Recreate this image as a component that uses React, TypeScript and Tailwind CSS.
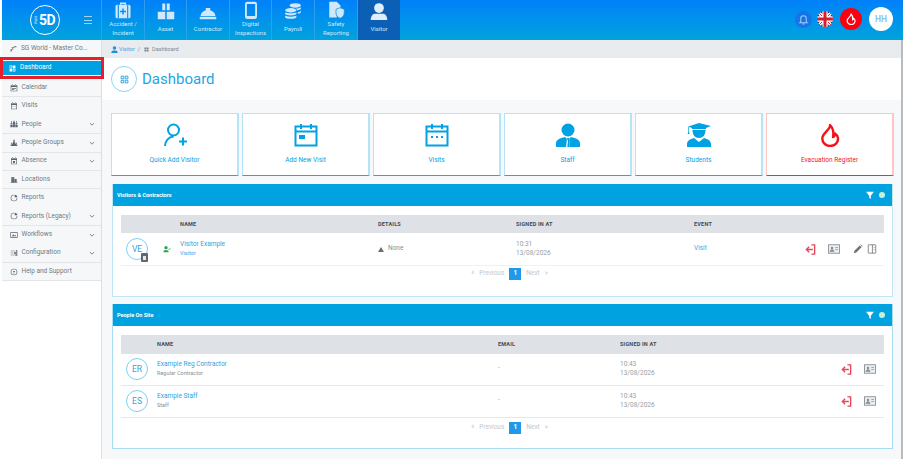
import React from "react";

type P = { className?: string };

const Ico = ({ className, children, vb = "0 0 24 24" }: P & { children: React.ReactNode; vb?: string }) => (
  <svg viewBox={vb} className={className} fill="currentColor" aria-hidden="true">
    {children}
  </svg>
);

const Logo = () => (
  <div className="w-[30px] h-[30px] rounded-full border-[1.5px] border-white flex items-center justify-center text-white font-bold text-[14px] leading-none tracking-[-0.5px]">
    <span className="text-[3px] [writing-mode:vertical-rl] rotate-180 mr-[1px] font-normal tracking-normal">World</span>5D
  </div>
);

const navIcons: Record<string, React.ReactNode> = {
  case: (
    <>
      <rect x="2" y="5" width="20" height="18" rx="2" />
      <path d="M8 5V2h8v3h-2V4h-4v1z" />
      <path fill="#0a8fea" d="M5 5h1.500v18H5zM17.500 5H19v18h-1.500zM11 10h2v3h3v2h-3v3h-2v-3H8v-2h3z" />
    </>
  ),
  asset: <path d="M7 2h4v9H7zM13 2h4v9h-4zM1 13h10v10H1zM13 13h10v10H13zM5 13h2v3H5zM17 13h2v3h-2z" />,
  hat: <path d="M2 19a10 9 0 0 1 7-8V8h6v3a10 9 0 0 1 7 8zM1 20h22v3H1z" />,
  phone: <path fillRule="evenodd" d="M7 1h10a3 3 0 0 1 3 3v17a3 3 0 0 1-3 3H7a3 3 0 0 1-3-3V4a3 3 0 0 1 3-3zm-.500 3v16h11V4z" />,
  coins: (
    <>
      <ellipse cx="9" cy="11" rx="7.500" ry="3" />
      <path d="M1.500 13.500c1 2 14 2 15 0V16c-1 2.500-14 2.500-15 0zM1.500 18c1 2 14 2 15 0v2.500c-1 2.500-14 2.500-15 0z" />
      <ellipse cx="15" cy="4.500" rx="7.500" ry="3" />
      <path d="M22.500 7v2c-.5 1-3 2-5 2-.5-1-1-2-2-2 3 0 6-1 7-2zM22.500 11.500v2c-.5 1-2 1.500-4 2v-2c2-.3 3-1 4-2z" />
    </>
  ),
  safety: (
    <>
      <path d="M3 1h10l5 5v5l-5 3v8H3z" />
      <path d="M17.500 9l5.500 2v5c0 4-3 6-5.500 7-2.500-1-5.500-3-5.500-7v-5z" stroke="#0a90e8" strokeWidth="1" />
    </>
  ),
  visitor: (
    <>
      <circle cx="12" cy="8" r="6.500" />
      <path d="M1 24c0-6 3-8.500 6-8.500h10c3 0 6 2.500 6 8.500z" />
    </>
  ),
};

const navs = [
  { icon: "case", l: ["Accident /", "Incident"], w: "w-[43px]" },
  { icon: "asset", l: ["Asset"], w: "w-[42px]" },
  { icon: "hat", l: ["Contractor"], w: "w-[43px]" },
  { icon: "phone", l: ["Digital", "Inspections"], w: "w-[42px]" },
  { icon: "coins", l: ["Payroll"], w: "w-[43px]" },
  { icon: "safety", l: ["Safety", "Reporting"], w: "w-[43px]" },
  { icon: "visitor", l: ["Visitor"], w: "w-[42px]", active: true },
];

const Flame = ({ className }: P) => (
  <svg viewBox="0 0 24 24" className={className} fill="none" stroke="currentColor" strokeWidth="2.400" strokeLinejoin="round" aria-hidden="true">
    <path d="M12 2c1 4-6 7-7.500 12C3.500 19 7.500 23 12 23s8.500-3 8-8c-.2-2-1.500-3.500-3-4.500 0 1.500-.5 3-2 3.500C16 9 15 5 12 2z" />
  </svg>
);

const Flag = () => (
  <svg viewBox="0 0 24 24" className="w-[16px] h-[16px] rounded-full" aria-hidden="true">
    <rect width="24" height="24" fill="#27346f" />
    <path d="M0 0l24 24M24 0L0 24" stroke="#fff" strokeWidth="5" />
    <path d="M0 0l24 24M24 0L0 24" stroke="#d2202f" strokeWidth="1.500" />
    <path d="M12 0v24M0 12h24" stroke="#fff" strokeWidth="8" />
    <path d="M12 0v24M0 12h24" stroke="#d2202f" strokeWidth="4.500" />
  </svg>
);

const Header = () => (
  <header className="h-[40px] shrink-0 flex bg-gradient-to-b from-[#0080fa] to-[#00a3dc] ml-[2px]">
    <div className="w-[100px] shrink-0 flex items-center border-r border-[#2aa0f0]">
      <div className="ml-[28px]">
        <Logo />
      </div>
      <div className="ml-[24px] flex flex-col gap-[2.500px]">
        <span className="block w-[8px] h-[1px] bg-[#9fd3f7]" />
        <span className="block w-[8px] h-[1px] bg-[#9fd3f7]" />
        <span className="block w-[8px] h-[1px] bg-[#9fd3f7]" />
      </div>
    </div>
    {navs.map((n) => (
      <div
        key={n.icon}
        className={`${n.w} shrink-0 flex flex-col items-center border-r border-[#2aa0f0] pt-[1px] ${n.active ? "bg-[#0b5fb5] border-r-0" : ""}`}
      >
        <div className={`h-[19px] flex items-center justify-center ${n.active ? "text-[#dfeefa]" : "text-[#cfe8fb]"}`}>
          <Ico className="w-[18px] h-[18px]">{navIcons[n.icon]}</Ico>
        </div>
        <div className="flex-1 flex flex-col justify-center pb-[4px] text-[6px] leading-[9px] text-center text-[#cfe9fb]">
          {n.l.map((t) => (
            <div key={t}>{t}</div>
          ))}
        </div>
      </div>
    ))}
    <div className="flex-1 flex items-center justify-end pr-[10px] pb-[2px]">
      <div className="w-[17px] h-[17px] rounded-full bg-[#1773e8] flex items-center justify-center text-[#9fd0fa] mr-[5px]">
        <svg viewBox="0 0 24 24" className="w-[11px] h-[11px]" fill="none" stroke="currentColor" strokeWidth="2.200" aria-hidden="true">
          <path d="M6 17V10a6 6 0 0 1 12 0v7l2 2H4zM10 22h4" />
        </svg>
      </div>
      <Flag />
      <div className="ml-[7px] w-[22px] h-[22px] rounded-full bg-[#fa0010] flex items-center justify-center text-white">
        <Flame className="w-[12px] h-[12px]" />
      </div>
      <div className="ml-[7px] w-[24px] h-[24px] rounded-full bg-white flex items-center justify-center text-[#8cc4ec] font-bold text-[8.500px]">
        HH
      </div>
    </div>
  </header>
);

const side: { t: string; chev?: boolean; b?: boolean; i: React.ReactNode }[] = [
  { t: "Calendar", b: true, i: <path d="M2 4h20v18H2zM4 9v11h16V9zM6 12h12v2H6zM6 16h7v2H6zM6 1h2v4H6zM16 1h2v4h-2z" fillRule="evenodd" /> },
  { t: "Visits", i: <path fillRule="evenodd" d="M3 4h18v18H3zM5 9v11h14V9zM7 1h2v4H7zM15 1h2v4h-2zM8 12h2v2H8zM14 12h2v2h-2z" /> },
  { t: "People", chev: true, b: true, i: <path d="M2 8h5v5H2zM9 6h6v6H9zM17 8h5v5h-5zM1 14h6v8H1zM8 13h8v9H8zM17 14h6v8h-6zM3 4h3v3H3zM10 2h4v3h-4zM18 4h3v3h-3z" /> },
  { t: "People Groups", chev: true, b: true, i: <path d="M10 7l4 0 3 8 5 2v4H2v-4l5-2zM10 2h4v4h-4zM3 11h3v3H3zM18 11h3v3h-3z" /> },
  { t: "Absence", chev: true, b: true, i: <path fillRule="evenodd" d="M3 4h18v18H3zM5 9v11h14V9zM7 1h2v4H7zM15 1h2v4h-2zM9 12h6v6H9z" /> },
  { t: "Locations", b: true, i: <path fillRule="evenodd" d="M4 3h9v15H4zM6 5v2h2V5zM10 5v2h2V5zM14 9h6v9h-6zM2 19h20v2H2z" /> },
  { t: "Reports", i: <path fillRule="evenodd" d="M12 2a10 10 0 1 0 10 10h-2a8 8 0 1 1-8-8zM14 2a8 8 0 0 1 8 8h-8z" /> },
  { t: "Reports (Legacy)", chev: true, b: true, i: <path fillRule="evenodd" d="M12 2a10 10 0 1 0 10 10h-2a8 8 0 1 1-8-8zM14 2a8 8 0 0 1 8 8h-8z" /> },
  { t: "Workflows", chev: true, b: false, i: <path fillRule="evenodd" d="M1 4h22v16H1zM3 6v12h18V6zM5 16l5-6 4 4 2-2 3 4z" /> },
  { t: "Configuration", chev: true, b: true, i: <path d="M2 5h14v2H2zM2 11h8v2H2zM2 17h12v2H2zM18 4h4v4h-4zM12 10h10v4H12zM16 16h6v4h-6z" /> },
  { t: "Help and Support", b: true, i: <path fillRule="evenodd" d="M12 2a10 10 0 1 0 0 20 10 10 0 0 0 0-20zm0 2a8 8 0 1 1 0 16 8 8 0 0 1 0-16zM9 9h6v2h-2v3h-2v-3H9zM11 15h2v2h-2z" /> },
];

const Chevron = () => (
  <svg viewBox="0 0 10 10" className="w-[6px] h-[6px] text-[#777]" fill="none" stroke="currentColor" strokeWidth="1.500" aria-hidden="true">
    <path d="M1.500 3.500L5 7l3.500-3.500" />
  </svg>
);

const Sidebar = () => (
  <aside className="relative z-10 w-[102px] shrink-0 border-r border-[#dcdfe3] bg-white text-[6.500px] text-[#6f7a84]">
    <div className="ml-[2px] bg-[#f6f7f8]">
      <div className="h-[17px] flex items-center pl-[8px]">
        <svg viewBox="0 0 24 24" className="w-[7px] h-[7px] mr-[4px] text-[#666]" fill="currentColor" aria-hidden="true">
          <path d="M2 14h4v8H2zM8 10h3v6H8zM14 4h8v4h-8zM6 8h8v2H6z" />
        </svg>
        <span>SG World - Master Co...</span>
      </div>
      <div className="-ml-[2px] -mr-[3px] h-[22px] border-[3px] border-[#e5202c] bg-white flex">
        <div className="flex-1 bg-[#00a1e2] text-white flex items-center pl-[6px] border-y-[1px] border-white">
          <svg viewBox="0 0 24 24" className="w-[7px] h-[7px] mr-[4px]" fill="currentColor" aria-hidden="true">
            <path fillRule="evenodd" d="M2 2h9v9H2zM13 2h9v9h-9zM2 13h9v9H2zM13 13h9v9h-9zM4 4v5h5V4zM15 15v5h5v-5z" />
          </svg>
          Dashboard
        </div>
      </div>
      {side.map((s) => (
        <div
          key={s.t}
          className={`h-[18.400px] flex items-center pl-[8px] pr-[6px] border-b ${s.b ? "border-[#e3e5e8]" : "border-transparent"}`}
        >
          <svg viewBox="0 0 24 24" className="w-[8px] h-[8px] mr-[3.500px] shrink-0 text-[#5c6670]" fill="currentColor" aria-hidden="true">
            {s.i}
          </svg>
          <span className="flex-1">{s.t}</span>
          {s.chev && <Chevron />}
        </div>
      ))}
    </div>
  </aside>
);

const cards: { t: string; red?: boolean; i: React.ReactNode }[] = [
  {
    t: "Quick Add Visitor",
    i: (
      <svg viewBox="0 0 24 24" className="w-[24px] h-[24px]" fill="none" stroke="currentColor" strokeWidth="2" aria-hidden="true">
        <circle cx="10.500" cy="7" r="5.500" />
        <path d="M2 23c0-5 3.500-9 8.500-9.500M16 18.500h8M20 14.500v8" />
      </svg>
    ),
  },
  {
    t: "Add New Visit",
    i: (
      <svg viewBox="0 0 24 24" className="w-[24px] h-[24px]" fill="none" stroke="currentColor" strokeWidth="2" aria-hidden="true">
        <rect x="1.500" y="3.500" width="21" height="19" />
        <path d="M1.500 8.500h21M7 1v5M17 1v5" />
        <rect x="5" y="12" width="6" height="4" fill="currentColor" stroke="none" />
      </svg>
    ),
  },
  {
    t: "Visits",
    i: (
      <svg viewBox="0 0 24 24" className="w-[24px] h-[24px]" fill="none" stroke="currentColor" strokeWidth="2" aria-hidden="true">
        <rect x="1.500" y="3.500" width="21" height="19" />
        <path d="M1.500 8.500h21M7 1v5M17 1v5" />
        <path d="M6 14h2M11 14h2M16 14h2" />
      </svg>
    ),
  },
  {
    t: "Staff",
    i: (
      <svg viewBox="0 0 24 24" className="w-[24px] h-[24px]" fill="currentColor" aria-hidden="true">
        <circle cx="12" cy="7" r="6.500" />
        <path d="M0 24v-4c0-3 4-5 9-6l2 2-1 8zM24 24v-4c0-3-4-5-9-6l-2 2 1 8zM11 15h2l.5 2-.5 1 .7 6h-2.400l.7-6-.5-1z" />
      </svg>
    ),
  },
  {
    t: "Students",
    i: (
      <svg viewBox="0 0 24 24" className="w-[24px] h-[24px]" fill="currentColor" aria-hidden="true">
        <path d="M12 0l12 3-5 2v1H5V5L2 4v5l.7 2H.6l.7-2V3.500z" />
        <path d="M5.500 7h13c0 5-2.500 8-6.500 8s-6.500-3-6.500-8zM0 24v-3c0-3 3-5 7-6l5 4 5-4c4 1 7 3 7 6v3z" />
      </svg>
    ),
  },
  { t: "Evacuation Register", red: true, i: <Flame className="w-[24px] h-[24px]" /> },
];

const Card = ({ t, red, i }: (typeof cards)[number]) => (
  <div
    className={`flex-1 h-[63px] bg-white border border-r-[2px] flex flex-col items-center pt-[9px] ${
      red ? "border-[#ffc4c4] border-b-[#fa2a30] text-[#f5111a]" : "border-[#b5e3f8] border-b-[#1fa8e6] text-[#00a2e3]"
    }`}
  >
    {i}
    <div className="mt-[9px] text-[6.500px] leading-[9px]">{t}</div>
  </div>
);

const SectionHead = ({ t }: { t: string }) => (
  <div className="h-[22px] bg-[#00a2e0] flex items-center px-[4px] text-white font-bold text-[5.500px]">
    <span className="flex-1">{t}</span>
    <svg viewBox="0 0 10 10" className="w-[8px] h-[8px]" fill="currentColor" aria-hidden="true">
      <path d="M0 1h10L6 6v4L4 8.500V6z" />
    </svg>
    <span className="ml-[5px] mr-[3px] w-[6px] h-[6px] rounded-full bg-[#c5f0d5]" />
  </div>
);

const Exit = () => (
  <svg viewBox="0 0 24 24" className="w-[11px] h-[11px] text-[#e8465a]" fill="none" stroke="currentColor" strokeWidth="3" aria-hidden="true">
    <path d="M14 2h7v20h-7M17 12H3M9 6l-6 6 6 6" />
  </svg>
);

const IdCard = () => (
  <svg viewBox="0 0 24 24" className="w-[12px] h-[12px] text-[#8a8f94]" fill="none" stroke="currentColor" strokeWidth="1.800" aria-hidden="true">
    <rect x="1" y="3.500" width="22" height="17" fill="#eceff1" />
    <circle cx="8" cy="10" r="2.500" fill="currentColor" stroke="none" />
    <path d="M4 17c0-5 8-5 8 0zM14.500 9H20M14.500 13H20" fill="currentColor" strokeWidth="1.500" />
  </svg>
);

const Pager = () => (
  <div className="flex items-center justify-center pl-[14px] text-[6.500px] text-[#c4c8cc]">
    <span className="mr-[5px]">«</span>
    <span>Previous</span>
    <span className="mx-[5px] w-[12px] h-[12px] bg-[#2099e8] text-white font-bold flex items-center justify-center">1</span>
    <span>Next</span>
    <span className="ml-[5px]">»</span>
  </div>
);

const Avatar = ({ t, badge }: { t: string; badge?: boolean }) => (
  <div className="relative w-[22px] h-[22px] rounded-full border border-[#80cdf2] flex items-center justify-center text-[#2da4de] text-[8.500px]">
    {t}
    {badge && (
      <span className="absolute -right-[1px] -bottom-[3px] w-[7px] h-[9px] bg-[#5f6770] rounded-[1px] flex items-center justify-center">
        <span className="block w-[3px] h-[4px] bg-[#e8e8e8]" />
      </span>
    )}
  </div>
);

const headCell = "text-[5.500px] font-bold text-[#444c55] tracking-[0.2px]";

const Visitors = () => (
  <section className="h-[113px] shrink-0 bg-white border border-[#bfe6f6] border-t-0 flex flex-col">
    <SectionHead t="Visitors & Contractors" />
    <div className="mx-[8px] mt-[9px]">
      <div className={`grid grid-cols-[59px_198px_138px_178px_1fr] h-[18px] items-center bg-[#dee1e5] ${headCell}`}>
        <span />
        <span>NAME</span>
        <span>DETAILS</span>
        <span>SIGNED IN AT</span>
        <span>EVENT</span>
      </div>
      <div className="grid grid-cols-[59px_198px_138px_178px_1fr] h-[33px] items-center border-b border-[#f0f1f3] text-[6.500px]">
        <div className="flex items-center pl-[5px]">
          <Avatar t="VE" badge />
          <svg viewBox="0 0 24 24" className="ml-[15px] w-[8px] h-[8px] text-[#2aa84f]" fill="currentColor" aria-hidden="true">
            <circle cx="9" cy="8" r="5" />
            <path d="M1 22c0-5 3-7 8-7s8 2 8 7zM16 11l2 2 5-5 1 1-6 6-3-3z" />
          </svg>
        </div>
        <div className="leading-[9.500px]">
          <div className="text-[#2da4de]">Visitor Example</div>
          <div className="text-[#3c9be6] text-[5.500px]">Visitor</div>
        </div>
        <div className="flex items-center text-[#888e94]">
          <span className="w-0 h-0 border-x-[3px] border-x-transparent border-b-[5px] border-b-[#667079] mr-[4px]" />
          None
        </div>
        <div className="leading-[9.500px] text-[#9a9ea3]">
          <div>10:31</div>
          <div>13/08/2026</div>
        </div>
        <div className="flex items-center">
          <span className="w-[111px] text-[#3aa8e6]">Visit</span>
          <Exit />
          <span className="ml-[12px]"><IdCard /></span>
          <svg viewBox="0 0 24 24" className="ml-[13px] w-[10px] h-[10px] text-[#6c7278]" fill="currentColor" aria-hidden="true">
            <path d="M2 22l1.500-6L16 3.500l4.500 4.500L8 20.500zM17.500 2l1.500-1 4 4-1 1.500z" />
          </svg>
          <svg viewBox="0 0 24 24" className="ml-[4px] w-[10px] h-[10px] text-[#777]" fill="none" stroke="currentColor" strokeWidth="2" aria-hidden="true">
            <rect x="3" y="2" width="18" height="20" rx="1" />
            <path d="M13 2v20M16 8h2M16 13h2" />
          </svg>
        </div>
      </div>
      <div className="mt-[2px]">
        <Pager />
      </div>
    </div>
  </section>
);

const onsite = [
  { a: "ER", n: "Example Reg Contractor", r: "Regular Contractor", d: "13/08/2026" },
  { a: "ES", n: "Example Staff", r: "Staff", d: "13/08/2026" },
];

const OnSite = () => (
  <section className="h-[145px] shrink-0 bg-white border border-[#a8dcf2] border-t-0 flex flex-col">
    <SectionHead t="People On Site" />
    <div className="mx-[8px] mt-[9px]">
      <div className={`grid grid-cols-[36px_341px_122px_1fr] h-[18.500px] items-center bg-[#dee1e5] ${headCell}`}>
        <span />
        <span>NAME</span>
        <span>EMAIL</span>
        <span>SIGNED IN AT</span>
      </div>
      {onsite.map((o) => (
        <div
          key={o.a}
          className="grid grid-cols-[36px_341px_122px_1fr] h-[32px] items-center border-b-[1px] border-[#e6e8ea] text-[6.500px]"
        >
          <div className="pl-[5px]">
            <Avatar t={o.a} />
          </div>
          <div className="leading-[9.500px]">
            <div className="text-[#2da4de]">{o.n}</div>
            <div className="text-[#8a8f94] text-[5.500px]">{o.r}</div>
          </div>
          <div className="text-[#9a9ea3]">-</div>
          <div className="flex items-center">
            <div className="w-[221px] leading-[9.500px] text-[#9a9ea3]">
              <div>10:43</div>
              <div>{o.d}</div>
            </div>
            <Exit />
            <span className="ml-[12px]"><IdCard /></span>
          </div>
        </div>
      ))}
      <div className="mt-[4px]">
        <Pager />
      </div>
    </div>
  </section>
);

export default function App() {
  return (
    <div
      className="relative h-[459px] w-[903px] overflow-hidden flex flex-col bg-white"
      style={{ fontFamily: 'Roboto, "Liberation Sans", sans-serif' }}
    >
      <Header />
      <div className="flex-1 flex min-h-0">
        <Sidebar />
        <main className="flex-1 flex flex-col min-w-0 bg-[#f7f8fa] border-r-[2px] border-[#b9bcbf]">
          <div className="h-[18px] shrink-0 bg-[#e9ecef] flex items-center pl-[9px] text-[5.500px] text-[#7d8690]">
            <svg viewBox="0 0 24 24" className="w-[7px] h-[7px] mr-[1px] text-[#1f8fe0]" fill="currentColor" aria-hidden="true">
              <circle cx="12" cy="7" r="6" />
              <path d="M1 24c0-7 4-9 11-9s11 2 11 9z" />
            </svg>
            <span className="text-[#3e9fe0]">Visitor</span>
            <span className="mx-[3px]">/</span>
            <svg viewBox="0 0 24 24" className="w-[5px] h-[5px] mx-[1px] text-[#7d8690]" fill="currentColor" aria-hidden="true">
              <path d="M2 2h9v9H2zM13 2h9v9h-9zM2 13h9v9H2zM13 13h9v9h-9z" />
            </svg>
            <span className="ml-[2px]">Dashboard</span>
          </div>
          <div className="h-[42px] shrink-0 bg-white flex items-center pl-[9px]">
            <div className="w-[26px] h-[26px] rounded-full border border-[#8fd4f4] flex items-center justify-center text-[#2da4de]">
              <svg viewBox="0 0 24 24" className="w-[9px] h-[9px]" fill="none" stroke="currentColor" strokeWidth="2.500" aria-hidden="true">
                <path d="M3 3h7v7H3zM14 3h7v7h-7zM3 14h7v7H3zM14 14h7v7h-7z" />
              </svg>
            </div>
            <h1 className="ml-[5px] text-[15px] leading-none text-[#1ea6e2]">Dashboard</h1>
          </div>
          <div className="pl-[9px] pr-[7px] pt-[13px]">
            <div className="flex gap-[3px]">
              {cards.map((c) => (
                <Card key={c.t} {...c} />
              ))}
            </div>
            <div className="mt-[8px] ml-[1px] mr-[1px] flex flex-col gap-[7px]">
              <Visitors />
              <OnSite />
            </div>
          </div>
        </main>
      </div>
      <div className="absolute left-0 bottom-0 w-[50px] h-[2px] bg-[#8e9196]" />
    </div>
  );
}
